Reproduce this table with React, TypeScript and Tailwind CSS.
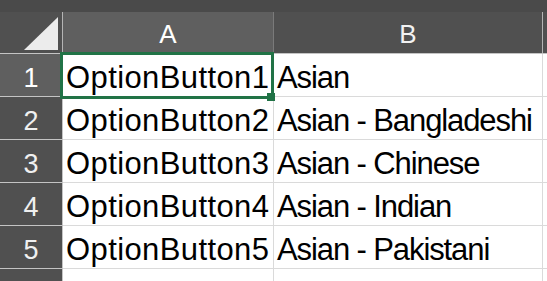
import React from 'react';

const rows = [
  { n: 1, a: 'OptionButton1', b: 'Asian' },
  { n: 2, a: 'OptionButton2', b: 'Asian - Bangladeshi' },
  { n: 3, a: 'OptionButton3', b: 'Asian - Chinese' },
  { n: 4, a: 'OptionButton4', b: 'Asian - Indian' },
  { n: 5, a: 'OptionButton5', b: 'Asian - Pakistani' },
  { n: 6, a: '', b: '' },
];

const CornerTriangle = () => (
  <svg width="62" height="41" viewBox="0 0 62 41" className="block">
    <polygon points="24,38 58,38 58,5" fill="#ececec" />
  </svg>
);

export default function App() {
  return (
    <div className="relative w-[547px] h-[281px] overflow-hidden bg-white font-['Liberation_Sans',Arial,sans-serif]">
      <div className="h-[12px] bg-[#4a4a4a]" />

      {/* column headers */}
      <div className="flex h-[42px] bg-[#505050] border-b border-[#c4c4c4]">
        <div className="w-[63px] shrink-0 border-r border-[#b4b4b4]">
          <CornerTriangle />
        </div>
        <div className="w-[211px] shrink-0 bg-[#5f5f5f] border-r border-[#7a7a7a] text-center text-[26px] text-white pt-[4px] leading-[37px]">
          A
        </div>
        <div className="w-[269px] shrink-0 border-r border-[#b4b4b4] text-center text-[26px] text-[#f2f2f2] pt-[4px] leading-[37px]">
          B
        </div>
        <div className="flex-1" />
      </div>

      {/* rows */}
      {rows.map((r) => (
        <div key={r.n} className="flex h-[43px]">
          <div
            className={`w-[63px] shrink-0 border-r border-b border-[#c4c4c4] text-center text-[27px] pt-[9px] leading-[30px] ${
              r.n === 1 ? 'bg-[#5f5f5f] text-white' : 'bg-[#505050] text-[#f0f0f0]'
            }`}
          >
            {r.n <= 5 ? r.n : ''}
          </div>
          <div className="w-[211px] shrink-0 border-r border-b border-[#dadada] pl-[3px] pt-[9px] text-[31px] leading-[30px] tracking-[0.4px] text-black whitespace-nowrap overflow-hidden">
            {r.a}
          </div>
          <div className="w-[269px] shrink-0 border-r border-b border-[#dadada] pl-[3px] pt-[9px] text-[31px] leading-[30px] tracking-[-1.1px] text-black whitespace-nowrap">
            {r.b}
          </div>
          <div className="flex-1 border-b border-[#dadada]" />
        </div>
      ))}

      {/* active cell selection */}
      <div className="absolute left-[60px] top-[52px] w-[214px] h-[47px] border-[3px] border-[#217346]" />
      <div className="absolute left-[267px] top-[93px] w-[8px] h-[8px] bg-[#217346]" />
    </div>
  );
}
